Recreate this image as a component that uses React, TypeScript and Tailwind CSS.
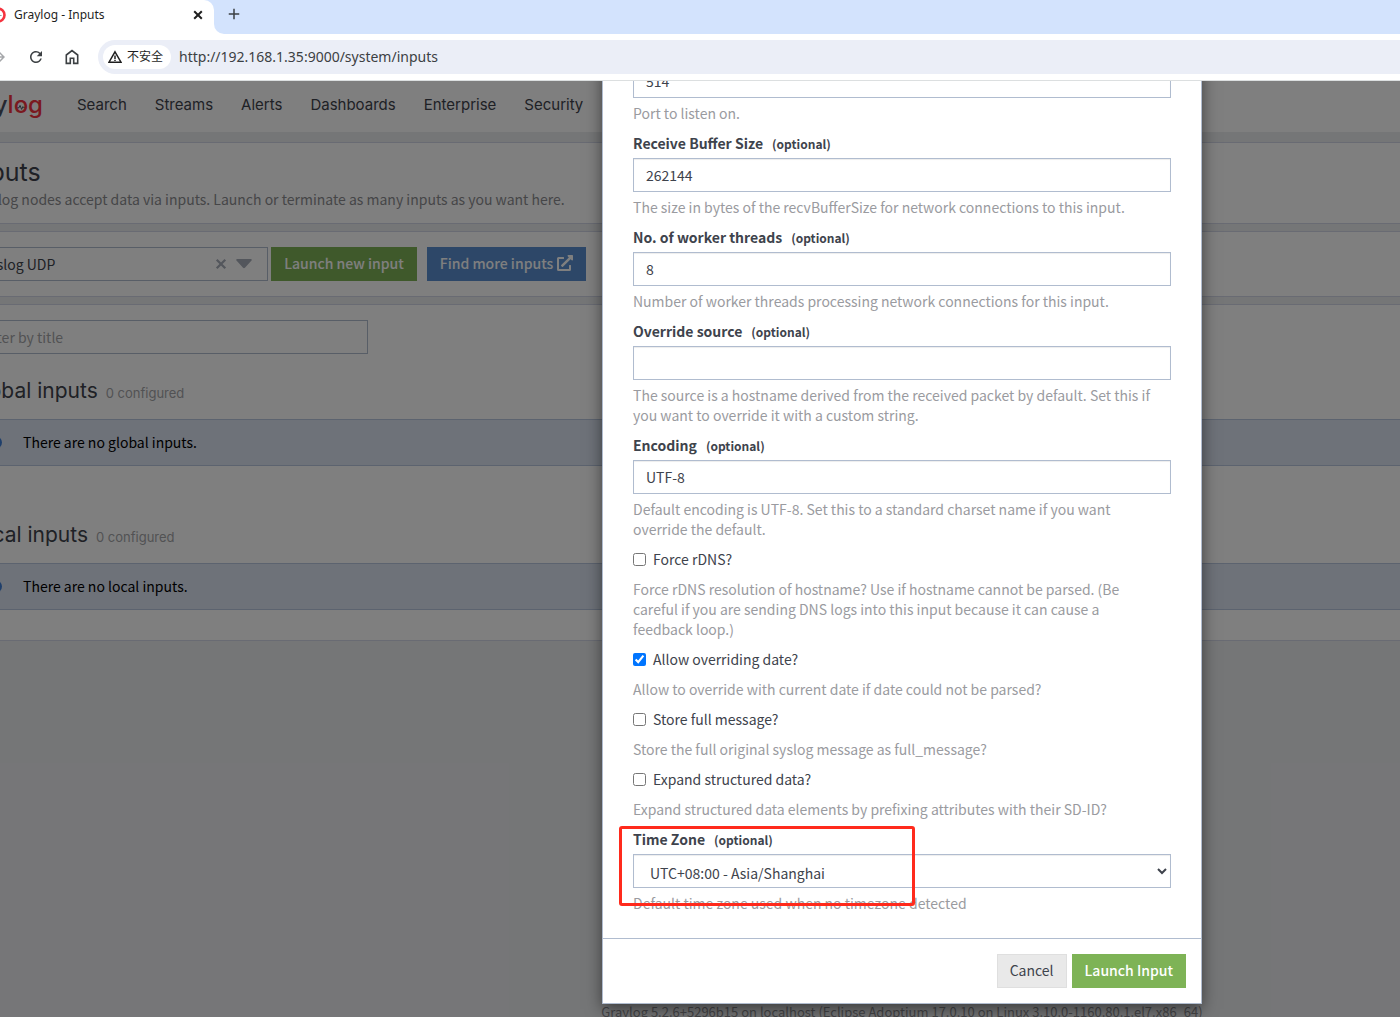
import type { ReactNode } from "react";
import { FaExternalLinkAlt } from "react-icons/fa";
import { MdAdd, MdRefresh, MdArrowForward } from "react-icons/md";

const NAV_ITEMS = [
  "Search",
  "Streams",
  "Alerts",
  "Dashboards",
  "Enterprise",
  "Security",
];

type TextFieldProps = {
  id: string;
  label: string;
  value: string;
  help: string;
};

const TEXT_FIELDS: ReadonlyArray<TextFieldProps> = [
  {
    id: "recv_buffer_size",
    label: "Receive Buffer Size",
    value: "262144",
    help: "The size in bytes of the recvBufferSize for network connections to this input.",
  },
  {
    id: "number_worker_threads",
    label: "No. of worker threads",
    value: "8",
    help: "Number of worker threads processing network connections for this input.",
  },
  {
    id: "override_source",
    label: "Override source",
    value: "",
    help: "The source is a hostname derived from the received packet by default. Set this if you want to override it with a custom string.",
  },
  {
    id: "charset_name",
    label: "Encoding",
    value: "UTF-8",
    help: "Default encoding is UTF-8. Set this to a standard charset name if you want override the default.",
  },
];

const CHECK_FIELDS = [
  {
    id: "force_rdns",
    label: "Force rDNS?",
    checked: false,
    help: "Force rDNS resolution of hostname? Use if hostname cannot be parsed. (Be careful if you are sending DNS logs into this input because it can cause a feedback loop.)",
  },
  {
    id: "allow_override_date",
    label: "Allow overriding date?",
    checked: true,
    help: "Allow to override with current date if date could not be parsed?",
  },
  {
    id: "store_full_message",
    label: "Store full message?",
    checked: false,
    help: "Store the full original syslog message as full_message?",
  },
  {
    id: "expand_structured_data",
    label: "Expand structured data?",
    checked: false,
    help: "Expand structured data elements by prefixing attributes with their SD-ID?",
  },
];

const CONTROL =
  "block h-[34px] w-full border border-[#b0bccf] bg-white px-3 text-[#3e434c] shadow-[inset_0_1px_1px_rgba(0,0,0,0.075)]";

export default function App() {
  return (
    <div className="flex h-screen flex-col overflow-hidden bg-white">
      <BrowserChrome />
      <div className="relative min-h-0 flex-1 overflow-hidden font-['Noto_Sans_CJK_SC',sans-serif] text-[14px] leading-5">
        <InputsPage />
        <div className="absolute inset-0 flex flex-col justify-end overflow-hidden bg-black/50 pb-[13px]">
          <InputDialog />
        </div>
      </div>
    </div>
  );
}

function BrowserChrome() {
  return (
    <header className="shrink-0 overflow-hidden border-b border-[#dcdfe0] font-['Noto_Sans','Noto_Sans_CJK_SC',sans-serif]">
      <div className="flex h-[34px]">
        <div className="w-[214px] bg-[#d3e3fd]">
          <div className="flex h-full items-center rounded-tr-[10px] bg-white pr-2 pb-1">
            <svg viewBox="0 0 16 16" className="-ml-[10px] size-4 shrink-0">
              <circle cx="8" cy="8" r="6.5" fill="none" stroke="#f5333f" strokeWidth="2.6" />
              <path d="M4 8.5h2l1.2-2.4 1.6 4 1.2-1.6h1.6" fill="none" stroke="#9aa0ac" strokeWidth="1" />
            </svg>
            <span className="ml-2 flex-1 text-[12px] text-[#1f1f1f]">Graylog - Inputs</span>
            <button type="button" aria-label="Close tab" className="text-[#1f1f1f]">
              <CrossIcon className="size-4" />
            </button>
          </div>
        </div>
        <div className="flex flex-1 items-center rounded-bl-[10px] bg-[#d3e3fd] pb-[6px] pl-[11px]">
          <button type="button" aria-label="New tab" className="text-[#3c4043]">
            <MdAdd className="size-[18px]" />
          </button>
        </div>
      </div>
      <div className="flex h-[46px] items-center text-[#3c4043]">
        <button type="button" aria-label="Forward" className="-ml-[10px] text-[#a5a7aa]">
          <MdArrowForward className="size-[18px]" />
        </button>
        <button type="button" aria-label="Reload" className="ml-[19px]">
          <MdRefresh className="size-[18px]" />
        </button>
        <button type="button" aria-label="Home" className="ml-[18px]">
          <svg viewBox="0 0 18 18" className="size-[18px]" fill="none" stroke="currentColor" strokeWidth="1.6">
            <path d="M3.3 15.4V7L9 2.6 14.7 7v8.4h-4v-5.2H7.3v5.2z" />
          </svg>
        </button>
        <div className="ml-[17px] flex h-[34px] flex-1 items-center rounded-l-full bg-[#ebeef7] pl-[5px]">
          <button
            type="button"
            className="flex h-6 items-center gap-[5px] rounded-full bg-white px-[5px] pr-2 text-[12px] text-[#1f1f1f]"
          >
            <svg viewBox="0 0 14 14" className="size-[14px]" fill="none" stroke="currentColor" strokeWidth="1.5">
              <path d="M7 1.8 13 12.2H1z" />
              <path d="M7 5.5V9M7 9.8v1.3" />
            </svg>
            不安全
          </button>
          <input
            aria-label="Address"
            defaultValue="http://192.168.1.35:9000/system/inputs"
            className="ml-2 min-w-0 flex-1 bg-transparent pb-px text-[14px] text-[#3c4043] outline-none"
          />
        </div>
      </div>
    </header>
  );
}

function CrossIcon({ className }: { className: string }) {
  return (
    <svg viewBox="0 0 16 16" className={className} fill="none" stroke="currentColor" strokeWidth="2">
      <path d="m4.2 4.2 7.6 7.6m0-7.6-7.6 7.6" />
    </svg>
  );
}

function InputsPage() {
  return (
    <div className="flex min-h-[calc(100%+5px)] flex-col bg-[#ebecef] text-[#3e434c]">
      <nav className="flex h-[51px] items-center gap-7 bg-white pb-1 font-['Inter',sans-serif] text-[15px]">
        <Logo />
        {NAV_ITEMS.map((item) => (
          <a key={item} href="#">
            {item}
          </a>
        ))}
      </nav>

      <main className="mt-[10px] -mr-1 -ml-[46px] flex flex-col gap-[7px]">
        <Panel>
          <div className="pt-[13px] pb-[14px]">
            <h1 className="font-['Inter',sans-serif] text-[25px] leading-8">Inputs</h1>
            <p className="mt-px text-[#8c8d90]">
              Graylog nodes accept data via inputs. Launch or terminate as many
              inputs as you want here.
            </p>
          </div>
        </Panel>

        <Panel>
          <div className="flex py-[15px]">
            <button
              type="button"
              aria-label="Select input"
              className="flex h-[34px] w-[300px] items-center border border-[#b0bccf] pr-[15px] pl-3"
            >
              <span className="flex-1 text-left">Syslog UDP</span>
              <CrossIcon className="size-[18px] text-[#a7adb8]" />
              <svg viewBox="0 0 16 10" className="ml-[6px] h-[10px] w-4 fill-[#a7adb8]">
                <path d="M1.5 0h13a1 1 0 0 1 .8 1.8L9.2 8.6a1.6 1.6 0 0 1-2.4 0L.7 1.8A1 1 0 0 1 1.5 0z" />
              </svg>
            </button>
            <button
              type="button"
              className="ml-[3px] h-[34px] w-[146px] bg-[#7eb356] pb-[2px] font-medium text-white"
            >
              Launch new input
            </button>
            <a
              href="#"
              className="ml-[10px] flex h-[34px] w-[159px] items-center justify-center gap-1 bg-[#5a8fd0] pb-[2px] font-medium text-white"
            >
              Find more inputs
              <FaExternalLinkAlt className="size-4" />
            </a>
          </div>
        </Panel>

        <Panel>
          <div className="pt-[15px] pb-[30px]">
            <input
              aria-label="Filter by title"
              placeholder="Filter by title"
              className="block h-[34px] w-[400px] border border-[#b0bccf] px-3 placeholder:text-[#a4a5a8]"
            />
            <InputGroup title="Global inputs" message="There are no global inputs." />
            <div className="h-8" />
            <InputGroup title="Local inputs" message="There are no local inputs." />
          </div>
        </Panel>
      </main>

      <footer className="mt-auto ml-[43%] flex w-[600px] justify-center text-[13px] whitespace-nowrap text-[#8c8d90]">
        Graylog 5.2.6+5296b15 on localhost (Eclipse Adoptium 17.0.10 on Linux
        3.10.0-1160.80.1.el7.x86_64)
      </footer>
    </div>
  );
}

function Panel({ children }: { children: ReactNode }) {
  return (
    <section className="border border-[#d3d6e6] bg-white pl-[13px]">
      {children}
    </section>
  );
}

function Logo() {
  return (
    <a
      href="#"
      aria-label="Graylog"
      className="flex w-[49px] justify-end pr-[6px] text-[24px] font-medium text-[#4a5160]"
    >
      <span>gray</span>
      <span className="relative text-[#f5333f]">
        log
        <svg
          viewBox="0 0 10 10"
          className="absolute top-2 left-[9px] size-2"
          fill="none"
          stroke="#4a5160"
          strokeWidth="1.2"
        >
          <path d="M.5 6h2l1.3-3 2 5 1.5-3.5.7 1h1.5" />
        </svg>
      </span>
    </a>
  );
}

function InputGroup({ title, message }: { title: string; message: string }) {
  return (
    <>
      <h2 className="mt-[21px] font-['Inter',sans-serif] text-[21px] leading-8">
        {title}
        <small className="ml-2 text-[13px] text-[#a4a5a8]">0 configured</small>
      </h2>
      <div className="mt-[10px] flex h-[47px] items-center border border-[#b9c6de] bg-[#dce4f3] pb-px pl-[20px] text-black">
        <svg viewBox="0 0 16 16" className="mr-[21px] size-[13px]">
          <circle cx="8" cy="8" r="8" fill="#3f7fd6" />
          <path d="M8 7v5M8 3.5v2" stroke="#fff" strokeWidth="2" />
        </svg>
        {message}
      </div>
    </>
  );
}

function InputDialog() {
  return (
    <form
      role="dialog"
      aria-label="Launch new input"
      className="ml-[43%] w-[600px] shrink-0 border border-[#b0bccf] bg-white text-[#3e434c] shadow-[0_5px_15px_rgba(0,0,0,0.5)]"
    >
      <div className="flex flex-col gap-[10px] px-[30px] pb-[25px]">
        <div>
          <input aria-label="Port" defaultValue="514" className={CONTROL} />
          <HelpText>Port to listen on.</HelpText>
        </div>
        {TEXT_FIELDS.map((field) => (
          <TextField key={field.id} {...field} />
        ))}
        {CHECK_FIELDS.map((field) => (
          <div key={field.id}>
            <label className="flex items-center gap-[7px]">
              <input
                type="checkbox"
                defaultChecked={field.checked}
                className="size-[13px]"
              />
              {field.label}
            </label>
            <p className="mt-[10px] pr-[14px] text-[#9a9ba0]">{field.help}</p>
          </div>
        ))}
        <div className="relative">
          <FieldLabel id="timezone">Time Zone</FieldLabel>
          <select id="timezone" className={`${CONTROL} pt-[3px]`}>
            <option>UTC+08:00 - Asia/Shanghai</option>
          </select>
          <HelpText>Default time zone used when no timezone detected</HelpText>
          <div className="pointer-events-none absolute -top-[3px] -left-[14px] h-[80px] w-[296px] rounded-[3px] border-3 border-[#ff2a1c]" />
        </div>
      </div>
      <div className="flex justify-end gap-[5px] border-t border-[#b0bccf] p-[15px]">
        <button
          type="button"
          className="h-[34px] border border-[#dfdfdf] bg-[#e9e9e9] px-3 pb-[2px]"
        >
          Cancel
        </button>
        <button
          type="submit"
          className="h-[34px] bg-[#7eb356] px-[13px] pb-[2px] font-medium text-white"
        >
          Launch Input
        </button>
      </div>
    </form>
  );
}

function TextField({ id, label, value, help }: TextFieldProps) {
  return (
    <div>
      <FieldLabel id={id}>{label}</FieldLabel>
      <input id={id} defaultValue={value} className={CONTROL} />
      <HelpText>{help}</HelpText>
    </div>
  );
}

function FieldLabel({ id, children }: { id: string; children: ReactNode }) {
  return (
    <label htmlFor={id} className="mb-[5px] block h-5 font-bold">
      {children}
      <small className="ml-[9px] text-[12px]">(optional)</small>
    </label>
  );
}

function HelpText({ children }: { children: ReactNode }) {
  return <p className="mt-[5px] pr-[14px] text-[#9a9ba0]">{children}</p>;
}
